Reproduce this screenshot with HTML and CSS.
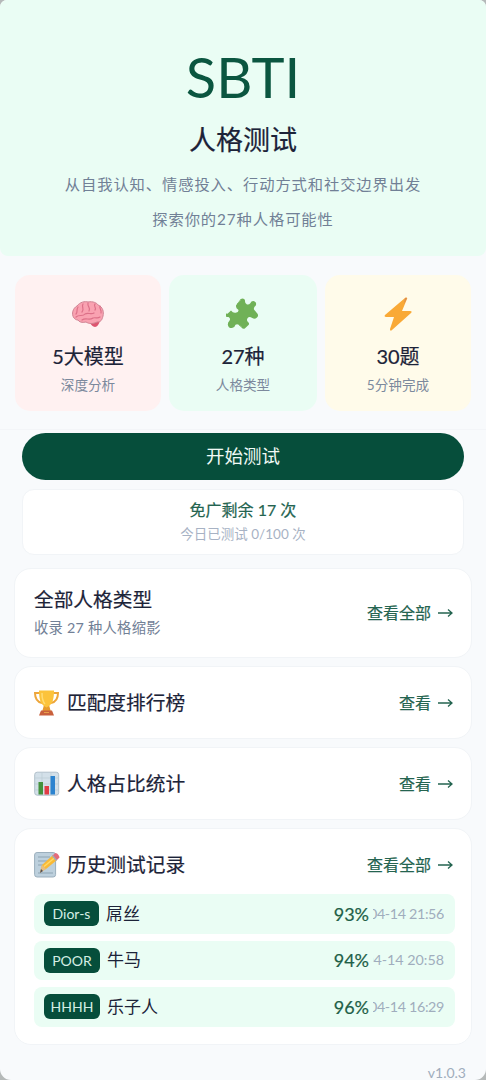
FILE: index.html
```html
<!DOCTYPE html>
<html lang="zh-CN">
<head>
<meta charset="utf-8">
<title>SBTI 人格测试</title>
<link rel="stylesheet" href="styles.css">
</head>
<body>
<main class="page">
  <header class="hero">
    <h1 class="brand">SBTI</h1>
    <h2 class="name">人格测试</h2>
    <p class="desc">从自我认知、情感投入、行动方式和社交边界出发</p>
    <p class="desc">探索你的27种人格可能性</p>
  </header>

  <section class="stats">
    <div class="stat stat-red">
      <svg class="stat-icon" viewBox="0 0 34 34">
        <path d="M19 25c3-1 7-2 10-1-1 3-3 6-5 6-2 0-5-3-5-5z" fill="#dd5570"/>
        <path d="M3 21c-3-4-1-10 3-12 3-4 8-5 11-4 5-1 9 1 10 3 5 2 6 7 5 11-1 4-2 6-6 6-4 2-8 2-11 0-4 1-7 0-8-2-2 0-3-1-4-2z" fill="#f9a2b1" stroke="#cf8393"/>
        <path d="M7 10c-2 3 0 5-2 7m7-10c-2 3 2 5-1 8m6-9c-1 4 3 4 1 8m6-7c-2 2 2 4 0 6m5-4c-1 3 2 4 1 7M5 20c3-3 7 0 9-3 3-2 6 1 9-1m-12 7c4-3 7 1 11-2 3-1 4 1 7-1" fill="none" stroke="#dc7088" stroke-width="1.2" stroke-linecap="round"/>
      </svg>
      <strong>5大模型</strong><span>深度分析</span>
    </div>
    <div class="stat stat-green">
      <svg class="stat-icon" viewBox="0 0 34 34">
        <path d="M1.500 16.800 5 13.500q2 2.700 4.700 2.200 3.500-.5 2.600-3-2.900-1.500-2.200-4.500L14.700 2q3-1.500 4.300 1-.5 3.500 2 4.400 2 .5 3.300-1.200 1.200-2.700 3.900-2 2.800 1.300 1.600 4.300-2.500 2-1.800 4l3.700 4.500q1 2.500-1 3.800-2 1.800-4.400.3-3-2.300-4.600-.1-1.800 2.500.8 4.400 1.200 1.400 0 2.600l-3.700 3.500q-1.800 1-3.500-1.300-2.800-4-5.800-2.500-.8 3-3.500 3.300-3.800.2-4.200-3.600 0-2 1.500-3.400 1.800-2.500-.8-4-3 .2-4.300-1-1.800-1.400-1.200-3.200z" fill="#70b157"/>
        <path d="m11 7 4-4m-2 25 3 2" fill="none" stroke="#86bf70"/>
      </svg>
      <strong>27种</strong><span>人格类型</span>
    </div>
    <div class="stat stat-yellow">
      <svg class="stat-icon" viewBox="0 0 34 34">
        <path d="M24 1 4 18c-1 1 0 2 1 2h8L9 32c0 2 1 2 2 1l19-17c1-1 1-2-1-2h-8l5-12c1-1-1-2-2-1z" fill="#f9a936"/>
        <path d="m24 1 2 0-3 6z" fill="#d98b56"/>
      </svg>
      <strong>30题</strong><span>5分钟完成</span>
    </div>
  </section>

  <section class="start">
    <button class="start-btn">开始测试</button>
    <div class="quota"><strong>免广剩余 17 次</strong><span>今日已测试 0/100 次</span></div>
  </section>

  <section class="cards">
    <div class="card card-types">
      <div class="text"><h3>全部人格类型</h3><p>收录 27 种人格缩影</p></div>
      <a class="more">查看全部 <svg class="arrow" viewBox="0 0 15 12"><path d="M0 6h14M10 2.500 14 6l-4 3.500"/></svg></a>
    </div>
    <div class="card card-rank">
      <svg class="icon" viewBox="0 0 26 28">
        <path d="M6 4H1c0 6 2 9 7 10M19 4h5c0 6-2 9-7 10" fill="none" stroke="#eda63b" stroke-width="2"/>
        <path d="M10 16h5l2 7H8z" fill="#e79b2d"/>
        <path d="M5 1.500h15c0 8-1 14-7.500 17C6 16 5 9 5 1.500z" fill="#fcc33b"/>
        <path d="M8 4c0 5 1 9 3 11" fill="none" stroke="#ffdc74" stroke-width="1.500"/>
        <path d="M7 21.500h11l2 5H5z" fill="#c9603c"/><path d="M10 23.500h5" stroke="#e8a04b"/>
      </svg>
      <h3>匹配度排行榜</h3>
      <a class="more">查看 <svg class="arrow" viewBox="0 0 15 12"><path d="M0 6h14M10 2.500 14 6l-4 3.500"/></svg></a>
    </div>
    <div class="card card-share">
      <svg class="icon" viewBox="0 0 26 28">
        <rect x=".7" y="2.200" width="24" height="23" rx="2.500" fill="#d3e0e9" stroke="#b1c0cb"/>
        <path d="M1 8h24M1 14h24M1 20h24M8 3v22M17 3v22" stroke="#bccbd6" stroke-width=".7"/>
        <rect x="4.500" y="12" width="4.500" height="12.500" fill="#43913d"/>
        <rect x="10.500" y="16" width="4.500" height="8.500" fill="#e13c46"/>
        <rect x="16.500" y="6" width="4.500" height="18.500" fill="#2c83cf"/>
      </svg>
      <h3>人格占比统计</h3>
      <a class="more">查看 <svg class="arrow" viewBox="0 0 15 12"><path d="M0 6h14M10 2.500 14 6l-4 3.500"/></svg></a>
    </div>
    <div class="card card-history">
      <div class="history-head">
        <svg class="icon" viewBox="0 0 26 28">
          <rect x=".6" y="1.500" width="21" height="24.500" rx="2.500" fill="#bdd0dd" stroke="#9bafbd"/>
          <path d="M4 6h12M4 10h10M4 14h7M4 22h15" stroke="#8da4b3"/>
          <path d="m6 21 2-7L19 4l4 5-11 9z" fill="#f9b936"/>
          <path d="m10 15.500 11-9" stroke="#ffda67" stroke-width="1.500"/>
          <path d="m8 14 4 4-6 4z" fill="#e5bd83"/><path d="m7 18 2 2-3 2z" fill="#525158"/>
          <path d="m18.500 4.500 3-2.500c2 0 4 3 4 4.500l-3 3z" fill="#e46b7b"/><path d="m18.500 4.500 4 5" stroke="#9fadb5" stroke-width="1.500"/>
        </svg>
        <h3>历史测试记录</h3>
        <a class="more">查看全部 <svg class="arrow" viewBox="0 0 15 12"><path d="M0 6h14M10 2.500 14 6l-4 3.500"/></svg></a>
      </div>
      <ul class="records">
        <li><b class="tag tag-short">Dior-s</b><span class="type">屌丝</span><em>93%</em><time><span>04-14 21:56</span></time></li>
        <li><b class="tag">POOR</b><span class="type">牛马</span><em>94%</em><time class="wide"><span>04-14 20:58</span></time></li>
        <li><b class="tag">HHHH</b><span class="type">乐子人</span><em>96%</em><time><span>04-14 16:29</span></time></li>
      </ul>
    </div>
  </section>
  <footer class="version">v1.0.3</footer>
</main>
</body>
</html>
```
FILE: styles.css
```css
* { box-sizing: border-box; margin: 0; padding: 0; }
body {
  background: #b5b9b9;
  font-family: Lato, "Noto Sans CJK SC", sans-serif;
  color: #1c2338;
  font-weight: 400;
}
h1, h2, h3, strong, b, em { font-weight: 400; font-style: normal; }
.page {
  width: 486px; height: 1080px; overflow: hidden;
  display: flex; flex-direction: column;
  background: #f8fafc;
  border-radius: 7px 7px 11px 11px;
}
.hero {
  height: 256px; flex: none; padding-top: 42px;
  background: #eafdf4;
  border-radius: 0 0 8px 8px;
  text-align: center;
}
.brand { font-size: 56px; line-height: 70px; color: #0b5640; }
.name { font-size: 27px; line-height: 40px; margin-top: 8px; -webkit-text-stroke: .2px #1c2338; }
.desc { font-size: 15.3px; letter-spacing: .9px; line-height: 35px; color: #718096; }
.name + .desc { margin-top: 7px; }

.stats {
  display: grid; grid-template-columns: 146px 148px 146px; gap: 8px;
  height: 174px; flex: none; padding: 19px 15px;
  border-bottom: 1px solid #f3f5f8;
}
.stat {
  height: 136px; padding-top: 22px; border-radius: 15px;
  display: flex; flex-direction: column; align-items: center;
}
.stat-red { background: #fff1f1; }
.stat-green { background: #eafdf4; }
.stat-yellow { background: #fffbea; }
.stat-icon { width: 34px; height: 34px; }
.stat strong { font-size: 20px; line-height: 28px; margin-top: 11px; -webkit-text-stroke: .2px #1c2338; }
.stat span { font-size: 13.6px; line-height: 20px; margin-top: 5px; color: #7c899d; }

.start { padding: 3px 22px 0; flex: none; }
.start-btn {
  display: block; width: 442px; height: 47px; border: 0; border-radius: 24px;
  background: #064e3b; color: #f0faf6;
  font: 400 18.5px/47px Lato, "Noto Sans CJK SC", sans-serif;
}
.quota {
  height: 66px; margin-top: 9px; padding-top: 8px;
  display: flex; flex-direction: column; align-items: center;
  background: #fff; border: 1px solid #f1f4f7; border-radius: 12px;
}
.quota strong { font-size: 16px; line-height: 24px; color: #246450; -webkit-text-stroke: .2px #246450; }
.quota span { font-size: 13.5px; line-height: 22px; margin-top: 1px; color: #a7b2c4; }

.cards { padding: 13px 14px 0; display: flex; flex-direction: column; gap: 8px; flex: none; }
.card {
  display: flex; align-items: center; padding: 0 18px 0 19px;
  background: #fff; border: 1px solid #f1f4f7; border-radius: 17px;
}
.card h3 { font-size: 19.7px; line-height: 28px; -webkit-text-stroke: .2px #1c2338; }
.card-types { height: 90px; padding-bottom: 1px; }
.card-types p { font-size: 14.3px; letter-spacing: .25px; line-height: 22px; margin-top: 3px; color: #718096; }
.card-rank { height: 73px; }
.card-share { height: 73px; }
.icon { width: 26px; height: 28px; margin-right: 7px; flex: none; }
.more {
  margin-left: auto; display: flex; align-items: center; gap: 7px;
  font-size: 16px; line-height: 24px; color: #246450; -webkit-text-stroke: .2px #246450;
}
.arrow { width: 15px; height: 12px; fill: none; stroke: #246450; stroke-width: 1.3; }
.card-history { height: 217px; flex-direction: column; align-items: stretch; padding: 22px 16px 0 19px; }
.history-head { display: flex; align-items: center; padding-right: 2px; height: 28px; }
.records { list-style: none; margin-top: 15px; display: flex; flex-direction: column; gap: 7px; }
.records li {
  height: 39.500px; padding: 0 11px 0 10px; display: flex; align-items: center;
  background: #eafdf4; border-radius: 8px;
}
.tag {
  width: 56px; height: 25px; border-radius: 6px; background: #064e3b; color: #d5eee5;
  font-size: 14px; line-height: 25px; text-align: center; flex: none;
}
.tag-short { width: 55px; }
.type { font-size: 17px; line-height: 26px; margin-left: 7px; }
.records em { margin-left: auto; font-size: 18px; line-height: 26px; color: #1e6047; -webkit-text-stroke: .2px #1e6047; }
.records time {
  width: 71px; height: 24px; margin-left: 4px; overflow: hidden; flex: none;
  display: flex; justify-content: flex-end;
  font-size: 14.3px; letter-spacing: -.35px; line-height: 24px; color: #a0adbd; white-space: nowrap;
}
.records time.wide { letter-spacing: 0; }
.version { margin-top: 17px; padding-right: 20px; text-align: right; font-size: 14px; line-height: 22px; color: #a0adbd; flex: none; }
```
